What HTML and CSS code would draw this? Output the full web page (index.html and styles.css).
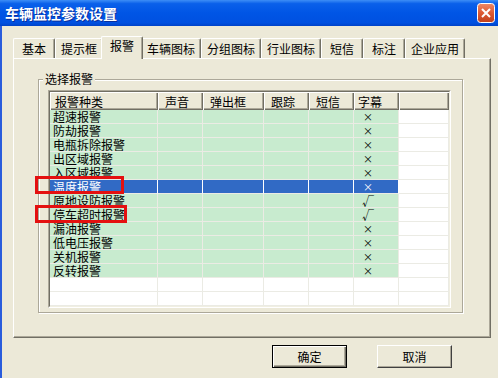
FILE: index.html
```html
<!DOCTYPE html>
<html lang="zh-cn">
<head>
    <meta charset="UTF-8">
    <title>车辆监控参数设置</title>
    <link rel="stylesheet" href="styles.css">
</head>
<body>
    <div class="dialog">
        <div class="titlebar">
            <span class="title">车辆监控参数设置</span>
            <svg class="close" width="18" height="20" viewBox="0 0 18 20">
                <defs>
                    <linearGradient id="closeBg" x1="0" y1="0" x2="0" y2="1">
                        <stop offset="0" stop-color="#ee8a68"/>
                        <stop offset="0.5" stop-color="#dc5a34"/>
                        <stop offset="1" stop-color="#c0401c"/>
                    </linearGradient>
                </defs>
                <rect x="0.5" y="0.5" width="17" height="19" rx="3" fill="url(#closeBg)" stroke="#fff"/>
                <path d="M5 6l8 8M13 6l-8 8" stroke="#fff" stroke-width="2"/>
            </svg>
        </div>
        <div class="client">
            <div class="tabs">
                <div class="tab">基本</div>
                <div class="tab">提示框</div>
                <div class="tab tab-active">报警</div>
                <div class="tab">车辆图标</div>
                <div class="tab">分组图标</div>
                <div class="tab">行业图标</div>
                <div class="tab">短信</div>
                <div class="tab">标注</div>
                <div class="tab">企业应用</div>
            </div>
            <div class="panel">
                <fieldset class="group">
                    <legend>选择报警</legend>
                    <div class="list">
                        <div class="list-body">
                            <table class="grid">
                                <colgroup>
                                    <col style="width:108px">
                                    <col style="width:45px">
                                    <col style="width:61px">
                                    <col style="width:45px">
                                    <col style="width:45px">
                                    <col style="width:45px">
                                    <col style="width:50px">
                                </colgroup>
                                <thead>
                                    <tr>
                                        <th>报警种类</th><th class="th-wide">声音</th><th class="th-wide">弹出框</th>
                                        <th class="th-wide">跟踪</th><th class="th-wide">短信</th><th class="th-narrow">字幕</th><th></th>
                                    </tr>
                                </thead>
                                <tbody>
                                    <tr class="row"><td>超速报警</td><td></td><td></td><td></td><td></td><td class="mark">×</td><td class="fill"></td></tr>
                                    <tr class="row"><td>防劫报警</td><td></td><td></td><td></td><td></td><td class="mark">×</td><td class="fill"></td></tr>
                                    <tr class="row"><td>电瓶拆除报警</td><td></td><td></td><td></td><td></td><td class="mark">×</td><td class="fill"></td></tr>
                                    <tr class="row"><td>出区域报警</td><td></td><td></td><td></td><td></td><td class="mark">×</td><td class="fill"></td></tr>
                                    <tr class="row"><td>入区域报警</td><td></td><td></td><td></td><td></td><td class="mark">×</td><td class="fill"></td></tr>
                                    <tr class="row row-sel"><td>温度报警</td><td></td><td></td><td></td><td></td><td class="mark">×</td><td class="fill"></td></tr>
                                    <tr class="row"><td>原地设防报警</td><td></td><td></td><td></td><td></td><td class="mark mark-ok">√</td><td class="fill"></td></tr>
                                    <tr class="row"><td>停车超时报警</td><td></td><td></td><td></td><td></td><td class="mark mark-ok">√</td><td class="fill"></td></tr>
                                    <tr class="row"><td>漏油报警</td><td></td><td></td><td></td><td></td><td class="mark">×</td><td class="fill"></td></tr>
                                    <tr class="row"><td>低电压报警</td><td></td><td></td><td></td><td></td><td class="mark">×</td><td class="fill"></td></tr>
                                    <tr class="row"><td>关机报警</td><td></td><td></td><td></td><td></td><td class="mark">×</td><td class="fill"></td></tr>
                                    <tr class="row"><td>反转报警</td><td></td><td></td><td></td><td></td><td class="mark">×</td><td class="fill"></td></tr>
                                    <tr><td></td><td></td><td></td><td></td><td></td><td></td><td></td></tr>
                                    <tr><td></td><td></td><td></td><td></td><td></td><td></td><td></td></tr>
                                </tbody>
                            </table>
                        </div>
                    </div>
                </fieldset>
            </div>
            <div class="actions">
                <button class="btn btn-default">确定</button>
                <button class="btn">取消</button>
            </div>
        </div>
        <!-- 红框标注 -->
        <div class="callout callout-1"></div>
        <div class="callout callout-2"></div>
    </div>
</body>
</html>
```

FILE: styles.css
```css
body {
    margin: 0;
    background-color: #ece9d8;
    font-family: "Noto Sans CJK SC", "Liberation Sans", sans-serif;
    font-size: 12px;
    color: #000;
}
.dialog {
    position: relative;
    width: 498px;
    height: 378px;
    overflow: hidden;
}
.titlebar {
    box-sizing: border-box;
    height: 26px;
    display: flex;
    align-items: center;
    justify-content: space-between;
    padding: 0 3px 0 5px;
    background: linear-gradient(180deg, #3d8ef6 0%, #0a60ea 14%, #0055e5 50%, #0050e0 88%, #0043c8 100%);
}
.title {
    color: #fff;
    font-weight: bold;
    font-size: 14px;
    text-shadow: 1px 1px 0 #0a2f9a;
}
.close {
    display: block;
}
.client {
    box-sizing: border-box;
    height: 352px;
    border-left: 2px solid #2a5cdc;
    padding: 10px 7px 0 11px;
}

/* 选项卡 */
.tabs {
    display: flex;
    align-items: flex-end;
    height: 22px;
    position: relative;
    z-index: 1;
}
.tab {
    box-sizing: border-box;
    height: 20px;
    min-width: 42px;
    padding: 0 5px;
    text-align: center;
    line-height: 19px;
    white-space: nowrap;
    background-color: #ece9d8;
    border-top: 1px solid #fff;
    border-left: 1px solid #fff;
    border-right: 1px solid #716f64;
    border-radius: 2px 2px 0 0;
    box-shadow: inset -1px 0 #aca899;
}
.tab-active {
    position: relative;
    z-index: 2;
    height: 23px;
    margin: 0 -2px -1px;
    padding: 0 8px;
    line-height: 18px;
}
.panel {
    box-sizing: border-box;
    height: 280px;
    border: 1px solid;
    border-color: #fff #716f64 #716f64 #fff;
    box-shadow: inset -1px -1px #aca899;
}

/* 分组框 */
.group {
    box-sizing: border-box;
    width: 425px;
    margin: 13px 0 0 24px;
    padding: 4px 11px 4px 9px;
    border: 1px solid #aca899;
    box-shadow: inset 1px 1px #fff, 1px 1px #fff;
}
.group legend {
    margin-left: -5px;
    padding: 0 2px;
    line-height: 14px;
    background-color: #ece9d8;
}
.list {
    box-sizing: border-box;
    height: 218px;
    border: 1px solid;
    border-color: #aca899 #fff #fff #aca899;
}
.list-body {
    height: 100%;
    box-sizing: border-box;
    border: 1px solid;
    border-color: #716f64 #f1efe2 #f1efe2 #716f64;
    background-color: #fff;
    overflow: hidden;
}
.grid {
    width: 399px;
    table-layout: fixed;
    border-collapse: separate;
    border-spacing: 0;
}
.grid th {
    box-sizing: border-box;
    height: 18px;
    padding: 0 0 0 5px;
    text-align: left;
    font-weight: normal;
    line-height: 17px;
    white-space: nowrap;
    background-color: #ece9d8;
    box-shadow: inset 1px 1px #fff, inset -1px -1px #716f64, inset -2px -2px #aca899;
}
.grid th.th-wide {
    padding-left: 7px;
}
.grid th.th-narrow {
    padding-left: 4px;
}
.grid td {
    box-sizing: border-box;
    height: 14px;
    padding: 0 0 0 3px;
    line-height: 13px;
    white-space: nowrap;
    border-right: 1px solid #ebebe4;
    border-bottom: 1px solid #ebebe4;
}
.row td {
    background-color: #c8ebcf;
}
.row td.fill {
    background-color: #fff;
}
.grid td.mark {
    padding-left: 9px;
    font-size: 10px;
}
.grid td.mark-ok {
    padding-left: 8px;
    font-size: 12px;
}
.row-sel td {
    background-color: #316ac5;
    color: #fff;
    border-right-color: #fff;
}
.row-sel td.fill {
    color: #000;
    border-right-color: #ebebe4;
}

/* 按钮 */
.actions {
    display: flex;
    justify-content: flex-end;
    gap: 30px;
    margin-top: 7px;
    padding-right: 39px;
}
.btn {
    box-sizing: border-box;
    width: 75px;
    height: 23px;
    padding: 0;
    font: inherit;
    color: #000;
    background-color: #ece9d8;
    border: 1px solid;
    border-color: #fff #404040 #404040 #fff;
    box-shadow: inset -1px -1px #aca899;
}
.btn-default {
    border-color: #000;
    box-shadow: inset 1px 1px #fff, inset -1px -1px #716f64, inset -2px -2px #aca899;
}

/* 标注框 */
.callout {
    position: absolute;
    box-sizing: border-box;
    height: 18px;
    border: 3px solid #e41010;
}
.callout-1 {
    left: 35px;
    top: 176px;
    width: 89px;
}
.callout-2 {
    left: 35px;
    top: 205px;
    width: 92px;
}
```
